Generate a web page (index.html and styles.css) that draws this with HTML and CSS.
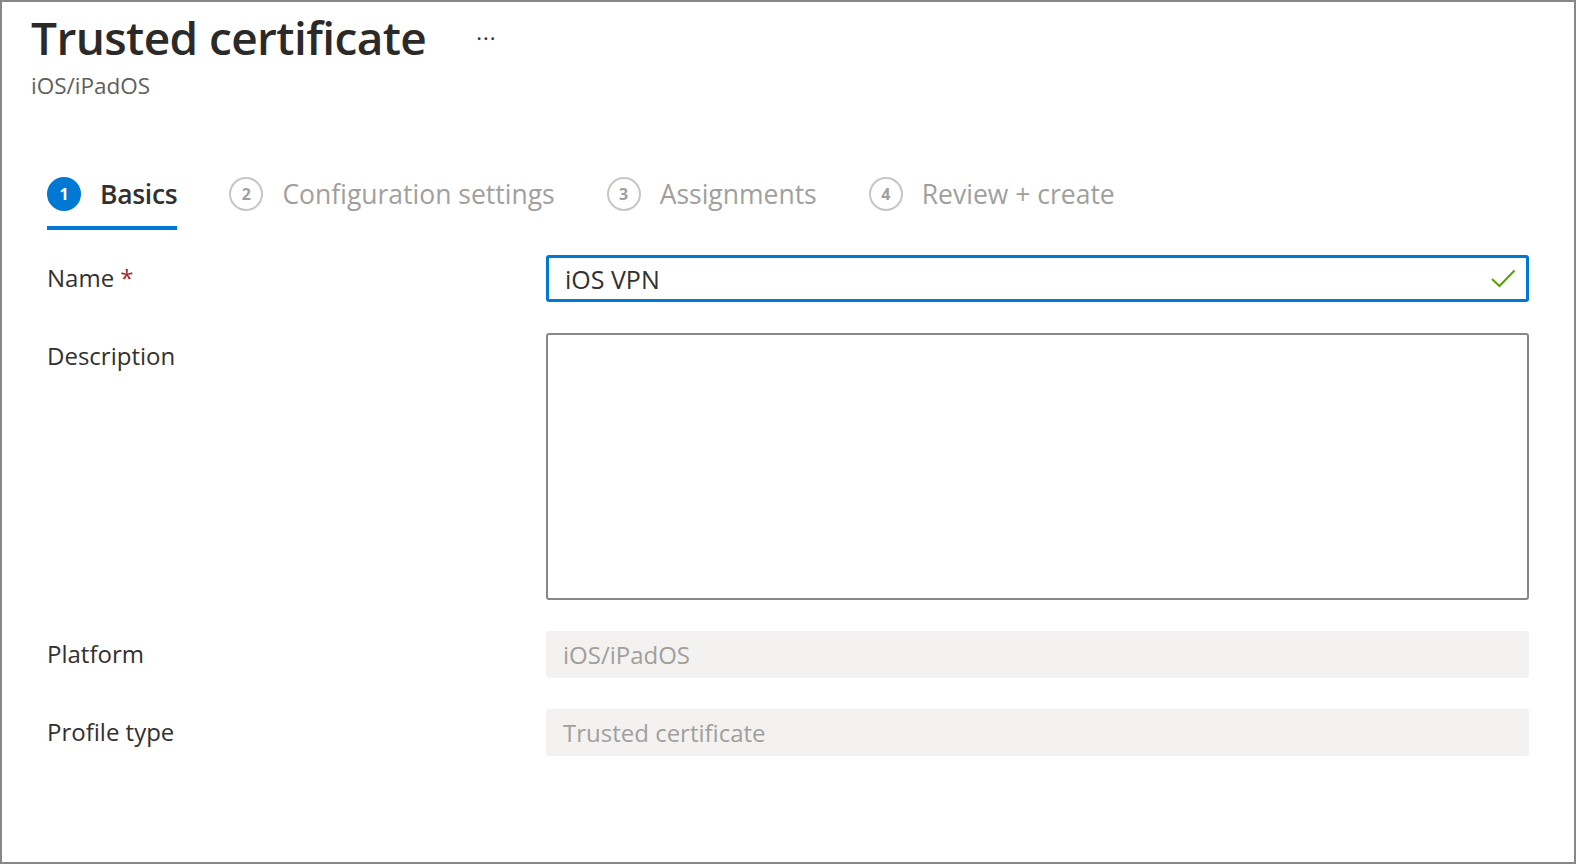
FILE: index.html
```html
<!DOCTYPE html>
<html lang="en">
<head>
<meta charset="utf-8">
<title>Trusted certificate</title>
<link rel="stylesheet" href="styles.css">
</head>
<body>
<div class="frame">
  <header class="header">
    <div class="title-row">
      <h1 class="title">Trusted certificate</h1>
      <span class="more">&middot;&middot;&middot;</span>
    </div>
    <div class="subtitle">iOS/iPadOS</div>
  </header>

  <nav class="steps">
    <div class="step active"><span class="num">1</span><span class="label">Basics</span></div>
    <div class="step"><span class="num">2</span><span class="label">Configuration settings</span></div>
    <div class="step"><span class="num">3</span><span class="label">Assignments</span></div>
    <div class="step"><span class="num">4</span><span class="label">Review + create</span></div>
  </nav>

  <form class="form">
    <label class="field-label row-name">Name <span class="req">*</span></label>
    <div class="input focused">
      <span class="value">iOS VPN</span>
      <svg class="check" width="25" height="19" viewBox="0 0 25 19"><polyline points="1,10 8.5,17 23.5,1.5" fill="none" stroke="#57a300" stroke-width="2"/></svg>
    </div>

    <label class="field-label row-desc">Description</label>
    <div class="textarea"></div>

    <label class="field-label row-plat">Platform</label>
    <div class="input disabled"><span class="value">iOS/iPadOS</span></div>

    <label class="field-label row-prof">Profile type</label>
    <div class="input disabled"><span class="value">Trusted certificate</span></div>
  </form>
</div>
</body>
</html>
```

FILE: styles.css
```css
* { box-sizing: border-box; }
html, body { margin: 0; padding: 0; background: #fff; }
body { font-family: "Open Sans", "Noto Sans", sans-serif; color: #323130; }

.frame {
  width: 1576px;
  height: 864px;
  border: 2px solid #8a8886;
  padding: 0 45px 0 29px;
  overflow: hidden;
}

.header { padding-top: 5px; }
.title-row { display: flex; align-items: center; }
.title {
  margin: 0;
  font-size: 46px;
  font-weight: 600;
  line-height: 60px;
  letter-spacing: -0.6px;
  color: #2b2a29;
}
.more {
  margin-left: 50px;
  font-size: 22px;
  color: #323130;
  letter-spacing: 1px;
  line-height: 1;
  margin-top: 0;
}
.subtitle {
  font-size: 22.5px;
  line-height: 28px;
  color: #605e5c;
  margin-top: 5px;
}

.steps {
  display: flex;
  gap: 52px;
  margin: 77px 0 0 16px;
}
.step {
  display: flex;
  align-items: center;
  gap: 19px;
  padding-bottom: 15px;
  border-bottom: 4px solid transparent;
}
.step .num {
  width: 34px;
  height: 34px;
  border-radius: 50%;
  border: 2px solid #c8c6c4;
  display: flex;
  align-items: center;
  justify-content: center;
  font-size: 16px;
  font-weight: 700;
  color: #a19f9d;
}
.step .label {
  font-size: 26.5px;
  color: #a19f9d;
  line-height: 34px;
}
.step.active { border-bottom-color: #0078d4; }
.step.active .num {
  background: #0078d4;
  border-color: #0078d4;
  color: #fff;
}
.step.active .label { color: #323130; font-weight: 600; letter-spacing: -0.3px; }

.form {
  display: grid;
  grid-template-columns: 499px 1fr;
  row-gap: 31px;
  margin: 25px 0 0 16px;
  align-items: start;
}
.field-label {
  font-size: 24px;
  line-height: 46px;
  color: #323130;
}
.req { color: #a4262c; }

.input {
  height: 47px;
  border-radius: 3px;
  display: flex;
  align-items: center;
  padding: 0 12px 0 17px;
  font-size: 24px;
}
.input .value { flex: 1; }
.input.focused {
  border: 3px solid #0078d4;
  padding-left: 16px;
  padding-right: 10px;
  font-size: 25px;
  color: #323130;
}
.input.disabled {
  background: #f3f2f1;
  color: #a19f9d;
}
.check { display: block; }

.textarea {
  height: 267px;
  border: 2px solid #8a8886;
  border-radius: 3px;
}
```
